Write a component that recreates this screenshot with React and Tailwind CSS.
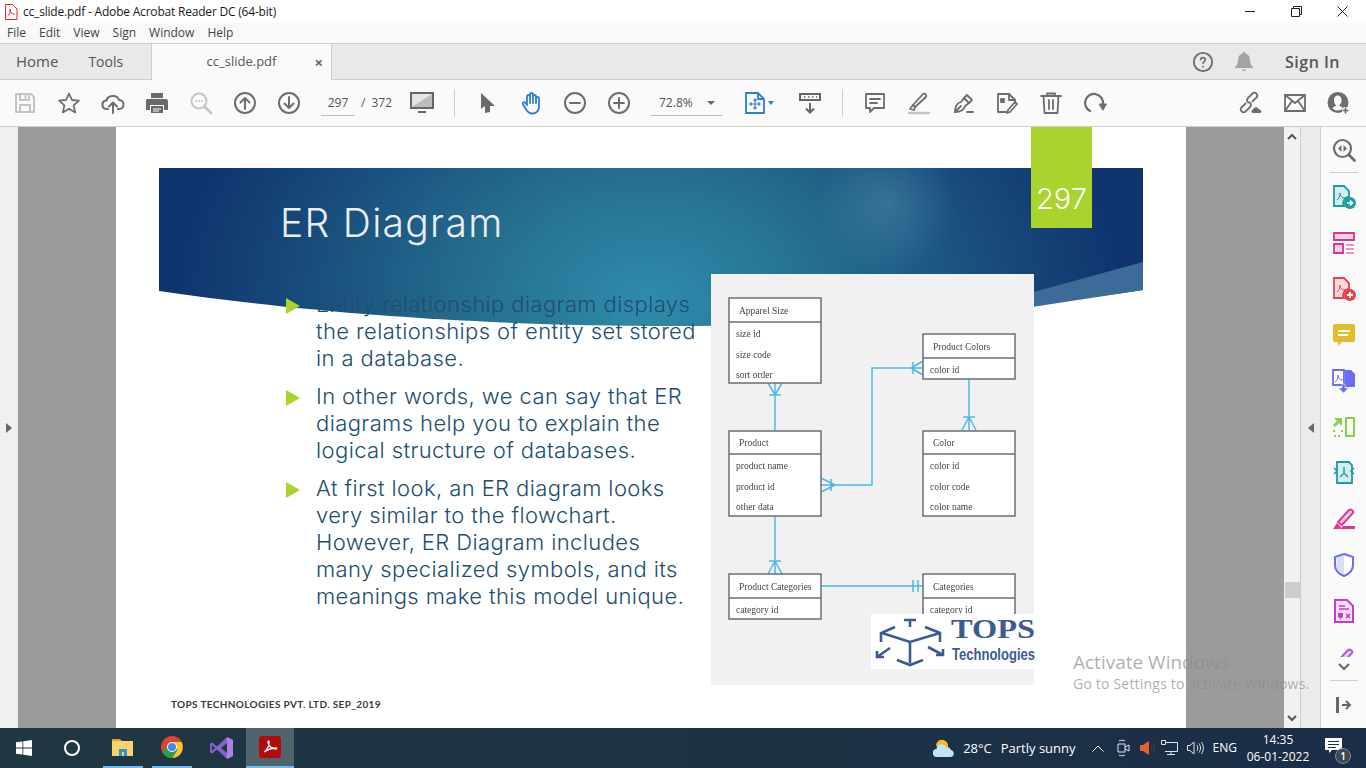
import React from 'react';

const UI = "font-['Open_Sans','Noto_Sans',sans-serif]";

const Ico = ({ size = 24, className = '', fill = 'none', stroke = '#6d6d6d', sw = 2, children }) => (
  <svg width={size} height={size} viewBox="0 0 24 24" fill={fill} stroke={stroke} strokeWidth={sw} strokeLinecap="round" strokeLinejoin="round" className={className}>
    {children}
  </svg>
);

const Slot = ({ children, className = 'w-[44px]' }) => (
  <div className={`flex items-center justify-center shrink-0 ${className}`}>{children}</div>
);

const TitleBar = () => (
  <div className="flex items-center h-[23px] bg-white pl-[4px] shrink-0">
    <svg width="14" height="16" viewBox="0 0 14 16">
      <path d="M1.500 .5h7l4.500 4.500v10.500h-11.500z" fill="#fff" stroke="#e0232a" />
      <path d="M3.500 12c2-1 3-4 3-6 0-1-.8-1-.8 0 0 2 2.500 4 5 4.200" stroke="#e0232a" fill="none" />
    </svg>
    <span className="ml-[5px] text-[12px] text-[#1a1a1a] leading-none tracking-[-0.2px]">cc_slide.pdf - Adobe Acrobat Reader DC (64-bit)</span>
    <div className="ml-auto mr-[1px] flex items-center h-full">
      <Slot className="w-[46px]">
        <div className="w-[10px] h-px bg-[#222]" />
      </Slot>
      <Slot className="w-[46px]">
        <svg width="11" height="11" viewBox="0 0 11 11" fill="none" stroke="#222"><path d="M.5 2.500h8v8h-8zM2.500 2.500v-2h8v8h-2" /></svg>
      </Slot>
      <Slot className="w-[46px]">
        <svg width="11" height="11" viewBox="0 0 11 11" fill="none" stroke="#222"><path d="M.5.5l10 10M10.500.5l-10 10" /></svg>
      </Slot>
    </div>
  </div>
);

const MenuBar = () => (
  <div className="flex items-center gap-[13px] h-[21px] pl-[7px] bg-[#f9f9f9] border-b border-[#cdcdcd] text-[12px] text-[#444] shrink-0">
    {['File', 'Edit', 'View', 'Sign', 'Window', 'Help'].map((m) => <span key={m}>{m}</span>)}
  </div>
);

const TabBar = () => (
  <div className="flex h-[36px] bg-[#e9e9e9] border-b border-[#cdcdcd] text-[#555] shrink-0">
    <div className="flex items-center w-[151px] pl-[16px] gap-[30px] text-[15px]">
      <span>Home</span>
      <span className="text-[14px]">Tools</span>
    </div>
    <div className="flex items-center relative w-[181px] h-[36px] bg-[#fafafa] border-x border-[#cdcdcd] text-[13px]">
      <span className="w-full text-center">cc_slide.pdf</span>
      <span className="absolute right-[8px] top-[7px] text-[15px] font-bold text-[#666]">×</span>
    </div>
    <div className="ml-auto flex items-center">
      <Ico size={22}>
        <circle cx="12" cy="12" r="10" />
        <path d="M9.500 9.500c0-3 5-3 5 0 0 2-2.500 2-2.500 4" strokeWidth="1.800" />
        <path d="M12 17v.2" />
      </Ico>
      <svg width="18" height="20" viewBox="0 0 18 20" className="ml-[21px]" fill="#a3a3a3">
        <path d="M9 0c1 0 1.500.6 1.500 1.500 3 .8 4.500 3.300 4.500 6.500 0 4 1 5.500 3 7v1h-18v-1c2-1.500 3-3 3-7 0-3.200 1.500-5.700 4.500-6.500 0-.9.500-1.500 1.500-1.500zM7 17.500h4c0 2-4 2-4 0z" />
      </svg>
      <span className="ml-[32px] mr-[26px] text-[16px] font-semibold text-[#555] tracking-[0.5px]">Sign In</span>
    </div>
  </div>
);

const Toolbar = () => (
  <div className="flex items-center h-[47px] pl-[3px] bg-[#fafafa] border-b border-[#cdcdcd] text-[#555] shrink-0">
    <Slot>
      <Ico stroke="#c4c4c4"><path d="M3 3h15l3 3v15h-18zM7 3v6h9v-6M7 21v-7h10v7" /><path d="M12.500 5v2" /></Ico>
    </Slot>
    <Slot>
      <Ico sw={1.800}><path d="M12 2.500l2.900 6.500 7 .7-5.300 4.700 1.600 7-6.200-3.700-6.200 3.700 1.600-7-5.300-4.700 7-.7z" /></Ico>
    </Slot>
    <Slot>
      <Ico><path d="M7 18h-1c-6 0-6-8-.5-8.500 1-6 11-6 12.500-.5 6 0 6 9 0 9h-1" /><path d="M12 22v-10M8 15.500l4-4 4 4" /></Ico>
    </Slot>
    <Slot>
      <svg width="24" height="24" viewBox="0 0 24 24" fill="#6a6a6a">
        <path d="M6 2h12v5h-12zM3 8h18a2 2 0 0 1 2 2v9h-4v-5h-14v5h-4v-9a2 2 0 0 1 1-2z" />
        <path d="M6 15h12v7h-12zM8 17.500v1h8v-1zM8 19.500v1h6v-1z" fillRule="evenodd" />
      </svg>
    </Slot>
    <Slot>
      <Ico stroke="#c4c4c4"><circle cx="10" cy="10" r="7.500" /><path d="M16 16l6 6" strokeWidth="2.500" /><path d="M7 10h.1M10 10h.1M13 10h.1" /></Ico>
    </Slot>
    <Slot>
      <Ico><circle cx="12" cy="12" r="10" /><path d="M12 18v-11M7.500 11.500l4.500-4.500 4.500 4.500" /></Ico>
    </Slot>
    <Slot>
      <Ico><circle cx="12" cy="12" r="10" /><path d="M12 6v11M7.500 12.500l4.500 4.500 4.500-4.500" /></Ico>
    </Slot>
    <div className="ml-[10px] w-[34px] h-[26px] border-b border-[#bdbdbd] text-[12px] leading-[26px] text-center">297</div>
    <span className="ml-[6px] text-[12px]">/</span>
    <span className="ml-[6px] text-[12px]">372</span>
    <Slot className="ml-[15px] w-[30px]">
      <svg width="24" height="22" viewBox="0 0 24 22"><path d="M1 1h22v15h-22z" fill="#e6e6e6" stroke="#666" strokeWidth="2" /><path d="M2 15l20-13v13z" fill="#bdbdbd" /><path d="M8 19h8v2h-8z" fill="#666" /></svg>
    </Slot>
    <div className="ml-[17px] mr-[11px] w-px h-[28px] bg-[#cdcdcd]" />
    <Slot>
      <svg width="14" height="20" viewBox="0 0 14 20" fill="#6a6a6a"><path d="M0 0l14 13h-5l3 0-3 0v6l-5 1v-7l-4 3z" /></svg>
    </Slot>
    <Slot className="w-[43px]">
      <Ico stroke="#2d7fd3" sw={1.800}>
        <path d="M7 14v-8.500a1.500 1.500 0 0 1 3 0v-2a1.500 1.500 0 0 1 3 0v2a1.500 1.500 0 0 1 3 0v2a1.500 1.500 0 0 1 3 0v8.500c0 4-3 6.500-6.500 6.500-4 0-5.500-2-7-5l-2.500-4c-1-2 1.500-3 2.500-1.500z" />
        <path d="M10 5v7M13 4v8M16 6v6" />
      </Ico>
    </Slot>
    <Slot>
      <Ico><circle cx="12" cy="12" r="10" /><path d="M7 12h10" /></Ico>
    </Slot>
    <Slot>
      <Ico><circle cx="12" cy="12" r="10" /><path d="M7 12h10M12 7v10" /></Ico>
    </Slot>
    <div className="flex items-center justify-between ml-[10px] w-[71px] h-[26px] pl-[8px] pr-[7px] border-b border-[#bdbdbd] text-[12px]">
      <span>72.8%</span>
      <span className="w-0 h-0 border-x-[4px] border-x-transparent border-t-[4px] border-t-[#666]" />
    </div>
    <Slot className="ml-[21px] w-[24px]">
      <svg width="20" height="22" viewBox="0 0 20 22" fill="none" stroke="#2d7fd3" strokeWidth="1.800">
        <path d="M1 1h12l6 6v14h-18zM13 1v6h6" />
        <path d="M10 7v10M5 12h10M8.500 8.500l1.500-1.500 1.500 1.500M8.500 15.500l1.500 1.500 1.500-1.500M6.500 10.500l-1.500 1.500 1.500 1.500M13.500 10.500l1.500 1.500-1.500 1.500" strokeWidth="1.200" />
      </svg>
    </Slot>
    <span className="ml-[1px] w-0 h-0 border-x-[3.500px] border-x-transparent border-t-[4px] border-t-[#2d7fd3]" />
    <Slot className="ml-[24px] w-[24px]">
      <svg width="22" height="22" viewBox="0 0 22 22" fill="none" stroke="#666" strokeWidth="2">
        <path d="M1 2h20v6h-20z" />
        <path d="M5 5h1.500M9 5h1.500M13 5h1.500M17 5h1" strokeWidth="1.500" />
        <path d="M11 11v9M7 16.500l4 4 4-4" />
      </svg>
    </Slot>
    <div className="ml-[20px] mr-[10px] w-px h-[28px] bg-[#cdcdcd]" />
    <Slot>
      <Ico sw={1.800}><path d="M3 3h18v14h-10l-4 4v-4h-4z" /><path d="M7 8h10M7 12h7" /></Ico>
    </Slot>
    <Slot>
      <Ico sw={1.800}><path d="M8 16l-2-2 10-11c2-1 4 1 3 3z" /><path d="M6 14l-3 4 4 1 1-3" /><path d="M2 22h20" stroke="#c4c4c4" strokeWidth="2.500" /></Ico>
    </Slot>
    <Slot>
      <Ico sw={1.800}><path d="M4 21c0-6 2-9 6-10l3-4 5 5-4 3c-1 4-4 6-10 6z" /><path d="M4 21l6-6M18 12l3-3-5-5-3 3" /><path d="M16 21h6" /></Ico>
    </Slot>
    <Slot>
      <Ico sw={1.800}><path d="M3 3h11l6 6v3M3 3v18h8" /><path d="M14 3v6h6" /><path d="M22 13l-7 8-3 1 1-3 7-8z" /><path d="M6 8h3v3h-3z" fill="#6d6d6d" /></Ico>
    </Slot>
    <Slot>
      <Ico sw={1.800}><path d="M2 5h20M8 5v-2.500h8v2.500M4.500 5l1 17h13l1-17" /><path d="M10 9v9M14 9v9" /></Ico>
    </Slot>
    <Slot>
      <Ico sw={2.200}><path d="M7 20a9 9 0 1 1 13-7" /><path d="M16.500 13h7l-3.500 6z" fill="#6d6d6d" strokeWidth="1" /></Ico>
    </Slot>
    <div className="ml-auto flex items-center pr-[5px]">
      <Slot>
        <svg width="26" height="24" viewBox="0 0 26 24" fill="none" stroke="#6d6d6d" strokeWidth="1.800">
          <path d="M8 12l-5 5a3 3 0 0 0 4 4l5-5a3 3 0 0 0-1-5M14 11l5-5a3 3 0 0 0-4-4l-5 5a3 3 0 0 0 1 5" />
          <path d="M15 22c-2 0-2-3 0-3.500 1-3 5-3 6 0 3 0 3 3.500 1 3.500z" fill="#6d6d6d" stroke="none" />
        </svg>
      </Slot>
      <Slot>
        <svg width="22" height="18" viewBox="0 0 22 18" fill="#fff" stroke="#6d6d6d" strokeWidth="1.800"><path d="M1 1h20v16h-20zM1 1l10 8 10-8M1 17l7-10M21 17l-7-10" /></svg>
      </Slot>
      <Slot>
        <svg width="24" height="24" viewBox="0 0 24 24" fill="#6d6d6d">
          <path d="M11 1a10.500 10.500 0 1 1 0 21 10.500 10.500 0 0 1 0-21zM11 4.500c-3 0-4 2.500-4 5 0 2.500 1 4 2.500 5-2 1-3.500 1.500-4 3a8 8 0 0 0 10.500 0c-.5-1.500-2-2-4-3 1.500-1 2.500-2.500 2.500-5 0-2.500-1-5-4-5z" fillRule="evenodd" />
          <path d="M18.500 16v7M15 19.500h7" stroke="#fafafa" strokeWidth="4" />
          <path d="M18.500 16.500v6M15.500 19.500h6" stroke="#6d6d6d" strokeWidth="1.600" />
        </svg>
      </Slot>
    </div>
  </div>
);

// the slide's curved header, it sits behind the bullet text
const Banner = () => (
  <svg width="984" height="160" viewBox="0 0 984 160" className="absolute left-[43px] top-[41px]">
    <defs>
      <radialGradient id="teal" gradientUnits="userSpaceOnUse" cx="490" cy="135" r="480" gradientTransform="translate(490 135) scale(1 .75) translate(-490 -135)">
        <stop offset="0" stopColor="#2f8cab" />
        <stop offset=".35" stopColor="#26708f" />
        <stop offset=".75" stopColor="#17497a" />
        <stop offset="1" stopColor="#0f336d" />
      </radialGradient>
      <radialGradient id="glow" gradientUnits="userSpaceOnUse" cx="728" cy="36" r="70">
        <stop offset="0" stopColor="#5a93b4" stopOpacity=".4" />
        <stop offset="1" stopColor="#5a93b4" stopOpacity="0" />
      </radialGradient>
    </defs>
    <path d="M0 0h984v122c-134 20-284 36-470 36-214 0-384-16-514-35z" fill="url(#teal)" />
    <rect x="620" y="0" width="220" height="130" fill="url(#glow)" />
    <path d="M860 128l124-34v28l-124 19z" fill="#3d6b97" />
  </svg>
);

const EntityBox = ({ x, y, w, h, split, title, rows }) => (
  <g>
    <rect x={x} y={y} width={w} height={h} fill="#fff" stroke="#667079" strokeWidth="1.500" />
    <path d={`M${x} ${split}h${w}`} stroke="#667079" strokeWidth="1.500" />
    <text x={x + 10} y={split - 8} fontSize="9.500" fill="#444">{title}</text>
    {rows.map((r, i) => (
      <text key={r} x={x + 7} y={split + 15 + i * 20.500} fontSize="9.500" fill="#444">{r}</text>
    ))}
  </g>
);

// the ER picture, coordinates are the ones of the page
const ErDiagram = () => (
  <svg width="325" height="411" viewBox="711 274 325 411" className="block font-['Liberation_Serif',serif] overflow-visible">
    <rect x="711" y="274" width="323" height="411" fill="#f1f1f1" />
    <g className="blur-[0.3px]">
      <g fill="none" stroke="#4fb7e3" strokeWidth="1.500">
        <path d="M775 383v47M768 383l7 12 7-12M769 395h12" />
        <path d="M821 485h51v-117h51M835 485h-14M821 478l14 7-14 7M831 479v12M923 361l-12 7 12 7M913 362v12" />
        <path d="M969 378v52M962 430l7-13 7 13M963 417h12" />
        <path d="M775 516v58M768 574l7-13 7 13M769 561h12" />
        <path d="M821 586h102M913 580v12M918 580v12" />
      </g>
      <EntityBox x={729} y={298} w={92} h={85} split={322} title="Apparel Size" rows={['size id', 'size code', 'sort order']} />
      <EntityBox x={923} y={334} w={92} h={45} split={358} title="Product Colors" rows={['color id']} />
      <EntityBox x={729} y={431} w={92} h={85} split={454} title="Product" rows={['product name', 'product id', 'other data']} />
      <EntityBox x={923} y={431} w={92} h={85} split={454} title="Color" rows={['color id', 'color code', 'color name']} />
      <EntityBox x={729} y={574} w={92} h={45} split={598} title="Product Categories" rows={['category id']} />
      <EntityBox x={923} y={574} w={92} h={60} split={598} title="Categories" rows={['category id']} />
    </g>
    <rect x="871" y="614" width="163" height="55" fill="#fff" />
    <g fill="none" stroke="#3d5a93" strokeWidth="2.600" className="blur-[0.3px]">
      <path d="M881 642v-9l14-6M940 642v-9l-15-6M882 633l28 9 30-9M910 642v21M897 660l13 5 13-5" />
      <path d="M910 627v-8M904 620h12M890 648l-13 9M877 651v6h7M928 647l15 8M943 649v6h-7" />
    </g>
    <text x="951" y="638" fontSize="27" fontWeight="700" fill="#3d5a93" textLength="84" lengthAdjust="spacingAndGlyphs">TOPS</text>
    <text x="952" y="660" fontSize="16" fontWeight="700" fill="#3d5a93" textLength="83" lengthAdjust="spacingAndGlyphs" className="font-['Liberation_Sans',sans-serif]">Technologies</text>
  </svg>
);

const bullets = [
  ['Entity relationship diagram displays', 'the relationships of entity set stored', 'in a database.'],
  ['In other words, we can say that ER', 'diagrams help you to explain the', 'logical structure of databases.'],
  ['At first look, an ER diagram looks', 'very similar to the flowchart.', 'However, ER Diagram includes', 'many specialized symbols, and its', 'meanings make this model unique.'],
];

const Slide = () => (
  <div className="relative w-[1070px] h-full bg-white overflow-hidden shrink-0">
    <Banner />
    <div className="absolute left-[915px] top-0 flex items-end justify-center w-[61px] h-[101px] pb-[15px] bg-[#aad32d] text-white text-[29px] leading-none font-['Inter',sans-serif] font-light z-10">297</div>
    <div className="relative flex h-full">
      <div className="flex flex-col w-[595px] pl-[170px] pt-[164px] gap-[11px] text-[22px] tracking-[0.4px] leading-[27px] text-[#214e70] font-['Inter',sans-serif] font-light">
        {bullets.map((lines) => (
          <div key={lines[0]} className="flex">
            <svg width="14" height="16" viewBox="0 0 14 16" className="mt-[7px] mr-[16px] shrink-0"><path d="M0 0l14 8-14 8z" fill="#a9d42c" /></svg>
            <div className="whitespace-nowrap">
              {lines.map((l) => <div key={l}>{l}</div>)}
            </div>
          </div>
        ))}
      </div>
      <div className="pt-[147px]">
        <ErDiagram />
      </div>
    </div>
    <h1 className="absolute left-[164px] top-[72px] text-[39px] leading-[48px] tracking-[1.300px] text-[#eaeef0] font-['Inter',sans-serif] font-light">ER Diagram</h1>
    <div className="absolute left-[55px] top-[570px] text-[10px] font-bold text-[#3a3a3a] font-['Lato',sans-serif] tracking-[0.35px]">TOPS TECHNOLOGIES PVT. LTD. SEP_2019</div>
  </div>
);

const railIcons = [
  // export
  <svg key="a" width="24" height="24" viewBox="0 0 24 24"><path d="M2 1h10l5 5v6a6 6 0 0 0-5 9h-10z" fill="#d5ecec" stroke="#1f9aa0" strokeWidth="1.800" /><path d="M5 15c2-1 3-4 3-7 0 3 2 5 5 5" stroke="#1f9aa0" fill="none" /><circle cx="18" cy="18" r="6" fill="#1f9aa0" /><path d="M15 18h5M18 15.500l2.500 2.500-2.500 2.500" stroke="#fff" strokeWidth="1.500" fill="none" /></svg>,
  // organize
  <svg key="b" width="24" height="24" viewBox="0 0 24 24" fill="none" stroke="#d9328f" strokeWidth="1.800"><path d="M2 2h20v7h-20z" fill="#f6d3e4" /><path d="M2 13h9v9h-9z" fill="#f6d3e4" /><path d="M14 14h8M14 18h8M14 22h8" strokeWidth="1.200" /></svg>,
  // create
  <svg key="c" width="24" height="24" viewBox="0 0 24 24"><path d="M2 1h10l5 5v6a6 6 0 0 0-5 9h-10z" fill="#f9dadd" stroke="#e8404f" strokeWidth="1.800" /><path d="M5 15c2-1 3-4 3-7 0 3 2 5 5 5" stroke="#e8404f" fill="none" /><circle cx="18" cy="18" r="6" fill="#e8404f" /><path d="M15 18h6M18 15v6" stroke="#fff" strokeWidth="1.800" /></svg>,
  // comment
  <svg key="d" width="24" height="24" viewBox="0 0 24 24"><path d="M3 1h18a2 2 0 0 1 2 2v14a2 2 0 0 1-2 2h-11l-4 4v-4h-3a2 2 0 0 1-2-2v-14a2 2 0 0 1 2-2z" fill="#e2bd2b" /><path d="M6 8h12M6 12h10" stroke="#fff" strokeWidth="2" /></svg>,
  // combine
  <svg key="e" width="24" height="24" viewBox="0 0 24 24"><path d="M13 1h6l4 4v13h-10z" fill="#6c6cf0" /><path d="M1 1h11v15h-11z" fill="#fff" stroke="#6c6cf0" strokeWidth="1.800" /><path d="M3 13c2-1 3-4 3-7 0 3 2 5 5 5" stroke="#6c6cf0" fill="none" /><path d="M10 15h3v4h3.500l-5 5-5-5h3.500z" fill="#6c6cf0" stroke="#fafafa" strokeWidth=".5" /></svg>,
  // compress
  <svg key="f" width="24" height="24" viewBox="0 0 24 24" fill="none" stroke="#83d24a" strokeWidth="2"><path d="M14 3h8v18h-8z" /><path d="M2 21h8M2 15v3M10 15v3" strokeDasharray="2 2" /><path d="M10 3v8l-3-3-4 4-2-2 4-4-3-3z" fill="#83d24a" stroke="none" /></svg>,
  // send for review
  <svg key="g" width="24" height="24" viewBox="0 0 24 24"><path d="M5 1h12l3 3v18h-15z" fill="#d5ecec" stroke="#1f9aa0" strokeWidth="1.800" /><path d="M12 6v6M12 12l-4 4M12 12l4 4" stroke="#1f9aa0" strokeWidth="1.400" fill="none" /><path d="M2 7l3 3-3 3M22 7l-3 3 3 3" stroke="#1f9aa0" strokeWidth="1.600" fill="none" /></svg>,
  // fill and sign
  <svg key="h" width="24" height="24" viewBox="0 0 24 24" fill="none" stroke="#e0359a" strokeWidth="2"><path d="M6 15l11-12c2-1.500 5 1 4 3l-11 12z" fill="#f9d3e8" /><path d="M1 22l4-6 4 4-1 2z" fill="#e0359a" stroke="none" /><path d="M11 19h12v3h-15z" fill="#e0359a" stroke="none" /></svg>,
  // protect
  <svg key="i" width="24" height="24" viewBox="0 0 24 24"><path d="M12 1l9 3v8c0 6-4 9-9 11-5-2-9-5-9-11v-8z" fill="#fff" stroke="#6c6cf0" strokeWidth="2" /><path d="M12 2.500v19c-4-2-7.500-4.500-7.500-9.500v-7z" fill="#dcdcfb" /></svg>,
  // forms
  <svg key="j" width="24" height="24" viewBox="0 0 24 24" fill="none" stroke="#c63ccb" strokeWidth="2"><path d="M3 1h12l6 6v16h-18z" fill="#f6def6" /><path d="M7 7h6M7 10h10" strokeWidth="1.300" /><path d="M6 14h5v4l-2.500 2-2.500-2z" fill="#c63ccb" stroke="none" /><path d="M14 15l4 4M18 15l-4 4" strokeWidth="1.600" /></svg>,
  // next tool, cut by the end of the list
  <svg key="k" width="24" height="24" viewBox="0 0 24 24" fill="#e2cdf7" stroke="#a45cdc" strokeWidth="2"><path d="M4 18l12-13c2-1.500 5 1 4 3l-12 13z" /></svg>,
];

const RightRail = () => (
  <div className={`flex flex-col items-center w-[46px] shrink-0 bg-[#fafafa] border-l border-[#cdcdcd] ${UI}`}>
    <div className="flex items-center justify-center h-[45px] shrink-0">
      <Ico sw={2.200}>
        <circle cx="10.500" cy="10.500" r="8.500" />
        <path d="M17 17l5.500 5.500" strokeWidth="2.800" />
        <path d="M9.500 7l-3.500 3.500 3.500 3.500zM11.500 7l3.500 3.500-3.500 3.500z" fill="#6d6d6d" stroke="none" />
      </Ico>
    </div>
    <div className="w-[28px] h-px bg-[#cdcdcd] shrink-0" />
    <div className="flex flex-col items-center gap-[22px] w-full h-[484px] pt-[12px] overflow-hidden shrink-0">
      {railIcons.map((icon) => <div key={icon.key} className="shrink-0 h-[24px]">{icon}</div>)}
    </div>
    <div className="flex items-center justify-center h-[20px] shrink-0">
      <svg width="12" height="8" viewBox="0 0 12 8" fill="none" stroke="#666" strokeWidth="2"><path d="M1 1l5 5 5-5" /></svg>
    </div>
    <div className="mt-[3px] w-[28px] h-px bg-[#cdcdcd] shrink-0" />
    <div className="flex items-center justify-center flex-1">
      <svg width="16" height="16" viewBox="0 0 16 16" fill="none" stroke="#666" strokeWidth="2"><path d="M1.500 0v16" strokeWidth="3" /><path d="M6 8h8M10 4l4 4-4 4" /></svg>
    </div>
  </div>
);

const Viewer = () => (
  <div className="flex flex-1 min-h-0 relative">
    <div className="flex items-center justify-center w-[18px] shrink-0 bg-[#f0f0f0]">
      <span className="w-0 h-0 border-y-[5px] border-y-transparent border-l-[6px] border-l-[#666]" />
    </div>
    <div className="flex flex-1 justify-center min-w-0 bg-[#9b9b9b] px-[98px]">
      <Slide />
    </div>
    <div className="flex flex-col items-center justify-between w-[17px] shrink-0 bg-[#f1f1f1] border-r border-[#cdcdcd] py-[6px] relative">
      <svg width="10" height="7" viewBox="0 0 10 7" fill="none" stroke="#555" strokeWidth="2"><path d="M1 6l4-4 4 4" /></svg>
      <div className="absolute top-[455px] left-[1px] w-[15px] h-[16px] bg-[#cdcdcd]" />
      <svg width="10" height="7" viewBox="0 0 10 7" fill="none" stroke="#555" strokeWidth="2"><path d="M1 1l4 4 4-4" /></svg>
    </div>
    <div className="flex items-center justify-center w-[19px] shrink-0 bg-[#ebebeb]">
      <span className="w-0 h-0 border-y-[5px] border-y-transparent border-r-[6px] border-r-[#666]" />
    </div>
    <RightRail />
    <div className={`absolute left-[1073px] top-[523px] pointer-events-none text-[#8c8c8c]/70 ${UI}`}>
      <div className="text-[19px] leading-[24px]">Activate Windows</div>
      <div className="text-[14px] leading-[20px] tracking-[0.2px] whitespace-nowrap">Go to Settings to activate Windows.</div>
    </div>
  </div>
);

const Taskbar = () => (
  <div className={`flex items-center h-[40px] shrink-0 bg-gradient-to-r from-[#1f3842] to-[#1a2e47] text-white ${UI}`}>
    <Slot className="w-[48px]">
      <svg width="16" height="16" viewBox="0 0 16 16" fill="#fff"><path d="M0 2.300l6.500-.9v6.200h-6.500zM7.300 1.300l8.700-1.300v7.600h-8.700zM0 8.400h6.500v6.200l-6.500-.9zM7.300 8.400h8.700v7.600l-8.700-1.300z" /></svg>
    </Slot>
    <Slot className="w-[48px]">
      <div className="w-[16px] h-[16px] rounded-full border-[2px] border-white" />
    </Slot>
    <Slot className="ml-[7px] w-[40px] h-full border-b-[2px] border-[#76b9ed]">
      <svg width="22" height="20" viewBox="0 0 22 20"><path d="M0 2h8l2 2h-10z" fill="#e0a22c" /><path d="M0 4h21v15h-21z" fill="#fcd36b" /><path d="M7 12h8v7h-3v-4h-2v4h-3z" fill="#2a93d8" /></svg>
    </Slot>
    <Slot className="ml-[9px] w-[40px] h-full border-b-[2px] border-[#76b9ed]">
      <svg width="22" height="22" viewBox="0 0 22 22">
        <circle cx="11" cy="11" r="11" fill="#e0442e" />
        <path d="M11 11l9.500 5.500a11 11 0 0 1-9.500 5.500 11 11 0 0 1-9.500-5.500l4-6.500z" fill="#2c9f48" />
        <path d="M11 6h9.500a11 11 0 0 1-9 16l5-8z" fill="#f8c92c" />
        <circle cx="11" cy="11" r="5" fill="#fff" />
        <circle cx="11" cy="11" r="4" fill="#4a86e8" />
      </svg>
    </Slot>
    <Slot className="ml-[8px] w-[44px]">
      <svg width="24" height="24" viewBox="0 0 24 24"><path d="M17 1l6 3v16l-6 3-10-9.500-5 4-2-1v-9l2-1 5 4z" fill="#8a5fcf" /><path d="M17 7l-6 5 6 5z" fill="#1f3842" /><path d="M2 9l3 3-3 3z" fill="#1f3842" /><path d="M17 1l6 3v16l-6 3z" fill="#a983e0" /></svg>
    </Slot>
    <Slot className="ml-[2px] w-[48px] h-full bg-[#4f646c] border-b-[2px] border-[#76b9ed]">
      <div className="flex items-center justify-center w-[22px] h-[22px] rounded-[3px] bg-[#b30b0b]">
        <svg width="16" height="16" viewBox="0 0 16 16" fill="none" stroke="#fff" strokeWidth="1.300"><path d="M2 13c3-2 5-6 5-10 0-1.500-1-1.500-1 0 0 4 4 7 8 7 1 0 1-1 0-1-4 0-9 2-12 4z" /></svg>
      </div>
    </Slot>
    <div className="ml-auto flex items-center h-full">
      <svg width="22" height="20" viewBox="0 0 22 20">
        <path d="M3 8a6 6 0 1 1 11 3z" fill="#f8b82c" />
        <path d="M4 19a4 4 0 0 1-.5-8 5 5 0 0 1 9.500-2 5 5 0 0 1 5 3 3.600 3.600 0 0 1 0 7z" fill="#bfe3f7" />
      </svg>
      <span className="ml-[8px] text-[13px] leading-none">28°C</span>
      <span className="ml-[9px] text-[13px] leading-none">Partly sunny</span>
      <svg width="12" height="7" viewBox="0 0 12 7" fill="none" stroke="#fff" strokeWidth="1" className="ml-[16px]"><path d="M.5 6.500l5.500-5.500 5.500 5.500" /></svg>
      <svg width="14" height="18" viewBox="0 0 14 18" fill="none" stroke="#e5e5e5" className="ml-[12px]"><path d="M2 5h7v8h-7zM9 8l4-2v6l-4-2M3 2c2-1 4-1 6 0M3 16c2 1 4 1 6 0" /></svg>
      <svg width="16" height="16" viewBox="0 0 16 16" className="ml-[10px]"><path d="M0 5h3l6-4v14l-6-4h-3z" fill="#e2632c" /><path d="M11 5c1 2 1 4 0 6M13 3c2 3 2 7 0 10" stroke="#5a3a30" fill="none" /></svg>
      <svg width="17" height="16" viewBox="0 0 17 16" fill="none" stroke="#e5e5e5" className="ml-[5px]"><path d="M4 2.500h12.500v9h-12.500M10 11.500v3M6 14.500h8M.5.500h4v4h-4z" /></svg>
      <svg width="17" height="14" viewBox="0 0 17 14" fill="none" stroke="#e5e5e5" className="ml-[9px]"><path d="M.5 4.500h2.500l4-3.500v12l-4-3.500h-2.500zM10 4c1 2 1 4 0 6M12 2.500c2 3 2 6 0 9M14.500 1c2.500 4 2.500 8 0 12" /></svg>
      <span className="ml-[9px] text-[12px] leading-none">ENG</span>
      <div className="flex flex-col items-center ml-[12px] w-[58px] text-[12px] leading-[17px]">
        <span>14:35</span>
        <span className="whitespace-nowrap">06-01-2022</span>
      </div>
      <div className="relative flex items-center justify-center ml-[17px] mr-[18px] w-[24px] h-full">
        <svg width="17" height="15" viewBox="0 0 17 15" fill="#fff" className="mb-[5px] ml-[-6px]"><path d="M0 0h17v12h-10l-3 3v-3h-4zM3 3v1h11v-1zM3 6v1h11v-1zM3 9v1h8v-1z" fillRule="evenodd" /></svg>
        <span className="absolute right-[-3px] top-[20px] flex items-center justify-center w-[16px] h-[16px] rounded-full bg-[#3b4a55] border border-[#888] text-[10px] leading-none font-semibold">1</span>
      </div>
    </div>
  </div>
);

export default function App() {
  return (
    <div className={`flex flex-col w-[1366px] h-[768px] overflow-hidden ${UI}`}>
      <TitleBar />
      <MenuBar />
      <TabBar />
      <Toolbar />
      <Viewer />
      <Taskbar />
    </div>
  );
}
